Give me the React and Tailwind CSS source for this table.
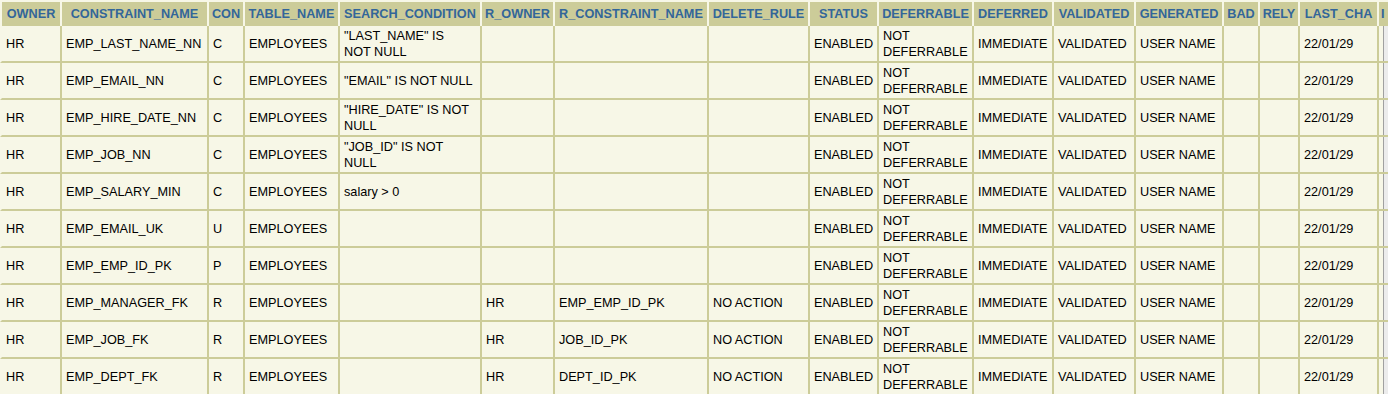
import React from 'react';

const columns = [
  { key: 'owner', label: 'OWNER', width: 'w-[60px]' },
  { key: 'name', label: 'CONSTRAINT_NAME', width: 'w-[147px]' },
  { key: 'type', label: 'CON', width: 'w-[36px]' },
  { key: 'table', label: 'TABLE_NAME', width: 'w-[95px]' },
  { key: 'search', label: 'SEARCH_CONDITION', width: 'w-[142px]' },
  { key: 'rOwner', label: 'R_OWNER', width: 'w-[73px]' },
  { key: 'rName', label: 'R_CONSTRAINT_NAME', width: 'w-[154px]' },
  { key: 'deleteRule', label: 'DELETE_RULE', width: 'w-[101px]' },
  { key: 'status', label: 'STATUS', width: 'w-[69px]' },
  { key: 'deferrable', label: 'DEFERRABLE', width: 'w-[95px]' },
  { key: 'deferred', label: 'DEFERRED', width: 'w-[80px]' },
  { key: 'validated', label: 'VALIDATED', width: 'w-[82px]' },
  { key: 'generated', label: 'GENERATED', width: 'w-[88px]' },
  { key: 'bad', label: 'BAD', width: 'w-[36px]' },
  { key: 'rely', label: 'RELY', width: 'w-[40px]' },
  { key: 'lastChange', label: 'LAST_CHA', width: 'w-[79px]' },
];

const base = {
  owner: 'HR',
  table: 'EMPLOYEES',
  status: 'ENABLED',
  deferrable: 'NOT DEFERRABLE',
  deferred: 'IMMEDIATE',
  validated: 'VALIDATED',
  generated: 'USER NAME',
  lastChange: '22/01/29',
};

// search conditions keep the line breaks the report wrapped them at
const rows = [
  { name: 'EMP_LAST_NAME_NN', type: 'C', search: '"LAST_NAME" IS\nNOT NULL' },
  { name: 'EMP_EMAIL_NN', type: 'C', search: '"EMAIL" IS NOT NULL' },
  { name: 'EMP_HIRE_DATE_NN', type: 'C', search: '"HIRE_DATE" IS NOT\nNULL' },
  { name: 'EMP_JOB_NN', type: 'C', search: '"JOB_ID" IS NOT\nNULL' },
  { name: 'EMP_SALARY_MIN', type: 'C', search: 'salary > 0' },
  { name: 'EMP_EMAIL_UK', type: 'U' },
  { name: 'EMP_EMP_ID_PK', type: 'P' },
  { name: 'EMP_MANAGER_FK', type: 'R', rOwner: 'HR', rName: 'EMP_EMP_ID_PK', deleteRule: 'NO ACTION' },
  { name: 'EMP_JOB_FK', type: 'R', rOwner: 'HR', rName: 'JOB_ID_PK', deleteRule: 'NO ACTION' },
  { name: 'EMP_DEPT_FK', type: 'R', rOwner: 'HR', rName: 'DEPT_ID_PK', deleteRule: 'NO ACTION' },
].map((r) => ({ ...base, ...r }));

export default function App() {
  return (
    <div className="w-[1388px] h-[394px] overflow-hidden bg-[#f7f7e7] font-['Liberation_Sans',Arial,sans-serif] text-[12.7px] leading-[16px]">
      <table className="table-fixed w-[1388px] border-separate border-spacing-0">
        <colgroup>
          {columns.map((c) => (
            <col key={c.key} className={c.width} />
          ))}
          <col className="w-[11px]" />
        </colgroup>
        <thead>
          <tr>
            {columns.map((c) => (
              <th
                key={c.key}
                className="h-[26px] p-0 border-t-2 border-l-2 border-[#f7f7e7] bg-[#cccc99] text-[#336699] font-bold text-center whitespace-nowrap overflow-hidden"
              >
                {c.label}
              </th>
            ))}
            {/* next column (INDEX_OWNER) is cut off by the window edge */}
            <th className="h-[26px] p-0 pl-[2px] border-t-2 border-l-2 border-[#f7f7e7] bg-[#cccc99] text-[#336699] font-bold text-left whitespace-nowrap">
              I
            </th>
          </tr>
        </thead>
        <tbody>
          {rows.map((row) => (
            <tr key={row.name}>
              {columns.map((c, i) => (
                <td
                  key={c.key}
                  className={`h-[37px] pl-[4px] pr-[2px] py-0 align-middle text-black whitespace-pre-line border-b-2 border-l-2 border-b-[#cccc99] ${
                    i === 0 ? 'border-l-[#f7f7e7]' : 'border-l-[#cccc99]'
                  }`}
                >
                  {row[c.key] || ''}
                </td>
              ))}
              <td className="h-[37px] p-0 border-l-2 border-b-2 border-[#cccc99] bg-[#ececec] shadow-[inset_4px_0_0_#f7f7e7,inset_5px_0_0_#a0a0a0]" />
            </tr>
          ))}
        </tbody>
      </table>
    </div>
  );
}
